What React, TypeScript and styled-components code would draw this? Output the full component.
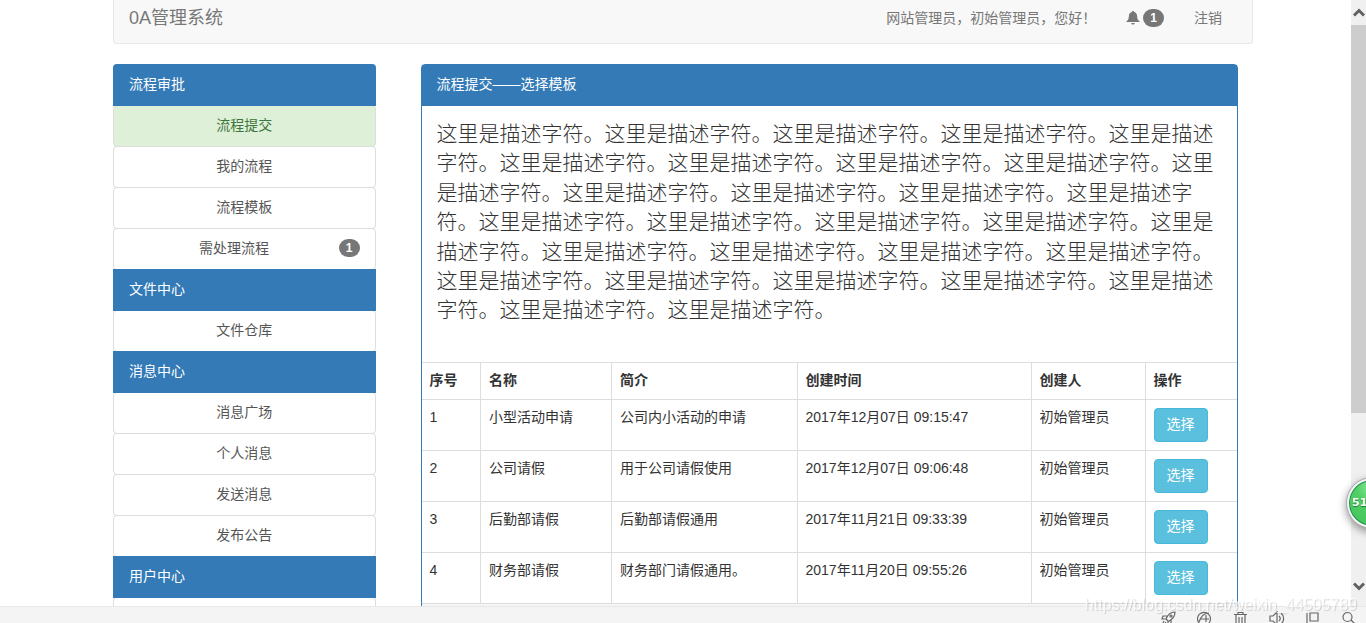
import React from 'react';
import styled, { createGlobalStyle, css } from 'styled-components';

const GlobalStyle = createGlobalStyle`
  *, *::before, *::after { box-sizing: border-box; }
  body {
    margin: 0;
    overflow: hidden;
    background: #fff;
    color: #333;
    font: 14px/20px "Liberation Sans", "Noto Sans CJK SC", sans-serif;
  }
`;

const Shell = styled.div`
  display: flex;
  flex-direction: column;
  height: 100vh;
`;

const Viewport = styled.div`
  position: relative;
  flex: 1;
  min-height: 0;
  overflow: hidden;
`;

const Container = styled.div`
  max-width: 1170px;
  margin: 0 auto;
  padding: 0 15px;
`;

const Navbar = styled.header`
  display: flex;
  align-items: center;
  justify-content: space-between;
  padding: 8px 30px 15px 15px;
  margin-bottom: 20px;
  background: #f8f8f8;
  border: 1px solid #e7e7e7;
  border-top: 0;
  border-radius: 0 0 4px 4px;
  color: #777;
`;

const Brand = styled.a`
  font-size: 18px;
  line-height: 20px;
  color: #777;
  text-decoration: none;
`;

const NavMenu = styled.nav`
  display: flex;
  align-items: center;
  gap: 30px;
`;

const NavLink = styled.a`
  display: flex;
  align-items: center;
  gap: 3px;
  color: #777;
  text-decoration: none;
`;

const Badge = styled.span`
  min-width: 10px;
  padding: 3px 7px;
  border-radius: 10px;
  background: #777;
  color: #fff;
  font-size: 12px;
  font-weight: 700;
  line-height: 12px;
  text-align: center;
`;

const Columns = styled.div`
  display: grid;
  grid-template-columns: 3fr 9fr;
  margin: 0 -15px;
`;

const SideColumn = styled.aside`
  padding: 0 15px;
`;

const MainColumn = styled.main`
  min-width: 0;
  padding: 0 30px;
`;

const GroupTitle = styled.h2<{ $first?: boolean }>`
  position: relative;
  z-index: 1;
  margin: ${p => (p.$first ? '0' : '-1px 0 0')};
  padding: 10px 16px 12px;
  border-radius: ${p => (p.$first ? '4px 4px 0 0' : '0')};
  background: #337ab7;
  color: #fff;
  font: inherit;
`;

const MenuList = styled.ul`
  margin: 0;
  padding: 0;
  list-style: none;
`;

const MenuItem = styled.li`
  margin-top: -1px;
`;

const MenuLink = styled.a<{ $active?: boolean }>`
  display: flex;
  align-items: center;
  min-height: 42px;
  padding: 9px 15px 11px;
  border: 1px solid #ddd;
  border-radius: 4px;
  color: #555;
  text-decoration: none;
  ${p =>
    p.$active &&
    css`
      background: #dff0d8;
      color: #3c763d;
    `}
`;

const MenuLabel = styled.span`
  flex: 1;
  text-align: center;
`;

const Panel = styled.section`
  border: 1px solid #337ab7;
  border-radius: 4px;
`;

const PanelTitle = styled.h1`
  margin: 0;
  padding: 9px 15px 12px;
  background: #337ab7;
  color: #fff;
  font: inherit;
`;

const PanelBody = styled.div`
  padding: 13px 15px 17px;
`;

const PanelFooter = styled.div`
  height: 42px;
  background: #f5f5f5;
`;

const Lead = styled.p`
  margin: 0 0 20px;
  font-size: 21px;
  font-weight: 300;
  line-height: 1.4;
`;

const Table = styled.table`
  width: 100%;
  border-collapse: collapse;
  table-layout: fixed;
`;

const cell = css`
  padding: 7px 8px 9px;
  border: 1px solid #ddd;
  text-align: left;
  vertical-align: top;
  &:first-child { border-left: 0; }
  &:last-child { border-right: 0; }
`;

const Th = styled.th<{ $width?: string }>`
  ${cell}
  width: ${p => p.$width ?? 'auto'};
  font-weight: 700;
`;

const Td = styled.td`
  ${cell}
`;

const ActionCell = styled.td`
  ${cell}
  padding: 8px;
`;

const SelectButton = styled.button`
  display: block;
  padding: 5px 12px 7px;
  border: 1px solid #46b8da;
  border-radius: 4px;
  background: #5bc0de;
  color: #fff;
  font: inherit;
  cursor: pointer;
`;

const Scrollbar = styled.div`
  position: absolute;
  top: 0;
  right: 0;
  bottom: 0;
  display: flex;
  flex-direction: column;
  width: 15px;
  background: #f0f0f0;
`;

const ScrollArrow = styled.div<{ $down?: boolean }>`
  display: flex;
  align-items: center;
  justify-content: center;
  height: ${p => (p.$down ? '40px' : '25px')};
`;

const ScrollTrack = styled.div`
  flex: 1;
  padding-bottom: 153px;
`;

const ScrollThumb = styled.div`
  height: 100%;
  background: #cdcdcd;
`;

const StatusBar = styled.footer`
  display: flex;
  justify-content: flex-end;
  gap: 20px;
  height: 17px;
  padding: 4px 9px 0 0;
  overflow: hidden;
  border-top: 1px solid #e8e8e8;
  background: #f4f4f4;
  color: #666;
`;

const Watermark = styled.div`
  position: fixed;
  right: 9px;
  bottom: 8px;
  z-index: 3;
  color: rgba(255, 255, 255, 0.8);
  font-size: 16px;
  text-shadow: 1px 1px 1px rgba(0, 0, 0, 0.16);
  pointer-events: none;
`;

const Bubble = styled.div`
  position: fixed;
  right: -31px;
  bottom: 95px;
  z-index: 2;
  width: 50px;
  height: 50px;
  padding-left: 3px;
  border: 2px solid #f4f4f4;
  outline: 1px solid #aaa;
  border-radius: 50%;
  background: radial-gradient(circle at 50% 15%, #8fe89c 0, #4fcf63 35%, #45c25c 100%);
  box-shadow: inset 0 0 0 1px #1f8a58, 0 3px 8px 1px rgba(0, 0, 0, 0.4);
  color: #fff;
  font: 700 11px/46px "DejaVu Sans", sans-serif;
  text-shadow: 0 1px 1px #1f7a3a;
`;

const BellIcon = () => (
  <svg width="14" height="14" viewBox="0 0 14 14" fill="currentColor" aria-hidden="true">
    <path d="M7 0c.7 0 1.1.4 1.1 1 2 .5 2.900 2 3 4 .1 3 .9 4.300 2.400 5.300V11H.5v-.7C2 9.300 2.800 8 2.900 5c.1-2 1-3.500 3-4 0-.6.400-1 1.100-1zM5.200 12h3.600c-.2 1-.9 1.600-1.800 1.600S5.400 13 5.200 12z" />
  </svg>
);

const Chevron = ({ down }: { down?: boolean }) => (
  <svg width="12" height="9" viewBox="0 0 12 9" fill="none" stroke="#606060" strokeWidth="3" aria-hidden="true">
    <path d={down ? 'M1 1.500 6 6.500 11 1.500' : 'M1 7.500 6 2.500 11 7.500'} />
  </svg>
);

const toolIcons = [
  <><path d="M5 8C7 3 10 1 14 1c0 4-2 7-6.500 9.500zM6 5 2 5l-1 3 4 0M10 9v4l-3 1V10M3 10l-2 4M5 11l-2 3" /><circle cx="10" cy="5" r="1" /></>,
  <><path d="M2 12A6.500 6.500 0 1 1 12 12M2 11C4 5 7 2 12 2M4 8h8M9 4v7" /></>,
  <><path d="M1 3.500h13M5 3.500V1.500h5v2M3 3.500V14h9V3.500M6 6v6M9 6v6" /></>,
  <><path d="M1 5h3l4-4v13l-4-4H1zM10 5c1.500 1.500 1.500 3.500 0 5M12 2c3.500 3 3.500 8 0 11" /></>,
  <><path d="M2 2v10M5 2h8v8H5z" /></>,
  <><circle cx="6.500" cy="6" r="4.500" /><path d="m10 9 4 4" /></>,
];

const menu = [
  { title: '流程审批', items: ['流程提交', '我的流程', '流程模板', '需处理流程'] },
  { title: '文件中心', items: ['文件仓库'] },
  { title: '消息中心', items: ['消息广场', '个人消息', '发送消息', '发布公告'] },
  { title: '用户中心', items: [''] },
];

const columns: [string, string?][] = [
  ['序号', '59px'],
  ['名称', '131px'],
  ['简介'],
  ['创建时间', '234px'],
  ['创建人', '114px'],
  ['操作', '92px'],
];

const rows = [
  ['1', '小型活动申请', '公司内小活动的申请', '2017年12月07日 09:15:47', '初始管理员'],
  ['2', '公司请假', '用于公司请假使用', '2017年12月07日 09:06:48', '初始管理员'],
  ['3', '后勤部请假', '后勤部请假通用', '2017年11月21日 09:33:39', '初始管理员'],
  ['4', '财务部请假', '财务部门请假通用。', '2017年11月20日 09:55:26', '初始管理员'],
];

export default function App() {
  return (
    <Shell>
      <GlobalStyle />
      <Viewport>
        <Container>
          <Navbar>
            <Brand href="#">0A管理系统</Brand>
            <NavMenu>
              <span>网站管理员，初始管理员，您好！</span>
              <NavLink href="#">
                <BellIcon />
                <Badge>1</Badge>
              </NavLink>
              <NavLink href="#">注销</NavLink>
            </NavMenu>
          </Navbar>
          <Columns>
            <SideColumn>
              {menu.map((group, g) => (
                <React.Fragment key={group.title}>
                  <GroupTitle $first={g === 0}>{group.title}</GroupTitle>
                  <MenuList>
                    {group.items.map(item => (
                      <MenuItem key={item}>
                        <MenuLink href="#" $active={item === '流程提交'}>
                          <MenuLabel>{item}</MenuLabel>
                          {item === '需处理流程' && <Badge>1</Badge>}
                        </MenuLink>
                      </MenuItem>
                    ))}
                  </MenuList>
                </React.Fragment>
              ))}
            </SideColumn>
            <MainColumn>
              <Panel>
                <PanelTitle>流程提交——选择模板</PanelTitle>
                <PanelBody>
                  <Lead>{'这里是描述字符。'.repeat(30)}</Lead>
                </PanelBody>
                <Table>
                  <thead>
                    <tr>
                      {columns.map(([name, width]) => (
                        <Th key={name} $width={width}>{name}</Th>
                      ))}
                    </tr>
                  </thead>
                  <tbody>
                    {rows.map(row => (
                      <tr key={row[0]}>
                        {row.map((value, i) => (
                          <Td key={i}>{value}</Td>
                        ))}
                        <ActionCell><SelectButton type="button">选择</SelectButton></ActionCell>
                      </tr>
                    ))}
                  </tbody>
                </Table>
                <PanelFooter />
              </Panel>
            </MainColumn>
          </Columns>
        </Container>
        <Scrollbar>
          <ScrollArrow><Chevron /></ScrollArrow>
          <ScrollTrack><ScrollThumb /></ScrollTrack>
          <ScrollArrow $down><Chevron down /></ScrollArrow>
        </Scrollbar>
      </Viewport>
      <StatusBar>
        {toolIcons.map((icon, i) => (
          <svg key={i} width="16" height="16" viewBox="0 0 16 16" fill="none" stroke="currentColor" strokeWidth="1.200" aria-hidden="true">
            {icon}
          </svg>
        ))}
      </StatusBar>
      <Watermark>https://blog.csdn.net/weixin_44505789</Watermark>
      <Bubble>51</Bubble>
    </Shell>
  );
}
